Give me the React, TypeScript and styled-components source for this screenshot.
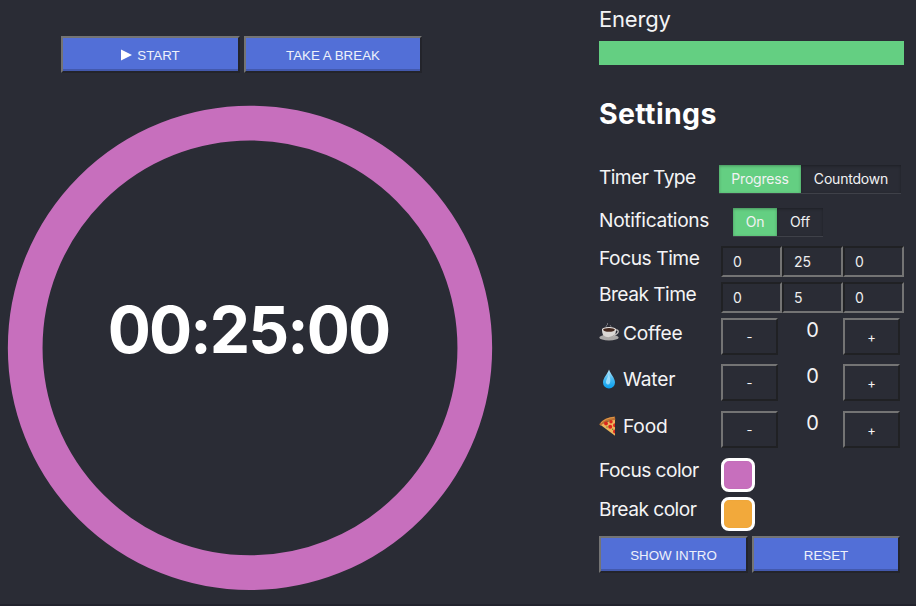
import React from "react";
import styled, { createGlobalStyle } from "styled-components";

const GlobalStyle = createGlobalStyle`
  * { box-sizing: border-box; }
  body {
    margin: 0;
    background: #2a2c35;
    color: #f4f4f5;
    font-family: Inter, "Noto Sans", sans-serif;
    overflow: hidden;
  }
`;

const Page = styled.div`
  display: flex;
  width: 916px;
  height: 606px;
  border-bottom: 2px solid #22232d;
`;

const TimerPane = styled.main`
  width: 599px;
  padding: 36px 0 0 7px;
`;

const Actions = styled.div<{ $inset?: number }>`
  display: flex;
  gap: 4px;
  padding-left: ${(p) => p.$inset ?? 0}px;
`;

const ActionButton = styled.button<{ $width: number }>`
  display: flex;
  align-items: center;
  justify-content: center;
  gap: 5px;
  width: ${(p) => p.$width}px;
  height: 37px;
  padding: 1px 0 0;
  border: 2px solid;
  border-color: #747474 #23242b #23242b #747474;
  background: #526fd7;
  box-shadow: inset 0 -2px 0 #4359ad;
  color: #eef1fb;
  font: 13.33px "Liberation Sans", Arial, sans-serif;
`;

const Dial = styled.div`
  display: grid;
  width: 486px;
  height: 486px;
  margin-top: 32px;
  place-items: center;
  > * { grid-area: 1 / 1; }
`;

const Clock = styled.div`
  margin-top: -37px;
  padding-right: 3px;
  color: #fff;
  font-size: 64px;
  font-weight: 700;
  line-height: 78px;
  letter-spacing: -1.9px;
  white-space: nowrap;
`;

const SidePane = styled.aside`
  width: 305px;
`;

const Label = styled.div<{ $top?: number; $tracking?: number }>`
  display: flex;
  align-items: center;
  gap: 4px;
  height: 24px;
  margin-top: ${(p) => p.$top ?? 0}px;
  font-size: 19.2px;
  line-height: 24px;
  letter-spacing: ${(p) => p.$tracking ?? -0.2}px;
  white-space: nowrap;
`;

const EnergyLabel = styled(Label)`
  height: 34px;
  align-items: flex-start;
  font-size: 22px;
`;

const EnergyBar = styled.div`
  height: 24px;
  background: #64cf82;
`;

const Heading = styled.h2`
  margin: 31px 0 33px;
  font-size: 28.5px;
  font-weight: 700;
  line-height: 36px;
  letter-spacing: 0.35px;
  color: #fff;
`;

const Row = styled.div<{ $height: number; $labelWidth?: number }>`
  display: grid;
  grid-template-columns: ${(p) => p.$labelWidth ?? 122}px 1fr;
  align-items: start;
  height: ${(p) => p.$height}px;
`;

const Toggle = styled.div`
  display: flex;
`;

const Option = styled.button<{ $width: number; $active?: boolean }>`
  width: ${(p) => p.$width}px;
  height: 28px;
  padding: 0;
  border: 0;
  background: ${(p) => (p.$active ? "#64cf82" : "#2a2c35")};
  box-shadow: inset 0 1px 3px rgba(0, 0, 0, 0.3), 0 1px rgba(255, 255, 255, 0.1);
  color: #f1f2f3;
  font: 14px/28px Inter, sans-serif;
  letter-spacing: -0.2px;
`;

const Cells = styled.div`
  display: grid;
  grid-template-columns: repeat(3, 61px);
`;

const TimeInput = styled.input`
  width: 61px;
  height: 31px;
  padding: 0 0 0 10px;
  border: 2px solid;
  border-color: #202124 #747474 #747474 #202124;
  border-radius: 0;
  background: #2a2c35;
  color: #eeeeef;
  font: 14px Inter, sans-serif;
`;

const StepButton = styled.button`
  width: 57px;
  height: 37px;
  padding: 0;
  border: 2px solid;
  border-color: #747474 #202124 #202124 #747474;
  background: #2a2c35;
  color: #f4f4f5;
  font: 13px Inter, sans-serif;
`;

const Count = styled.div`
  font-size: 20px;
  line-height: 25px;
  text-align: center;
`;

const Swatch = styled.div<{ $color: string }>`
  width: 34px;
  height: 34px;
  border: 3px solid #fff;
  border-radius: 8px;
  background: ${(p) => p.$color};
  box-shadow: inset 0 0 1px rgba(0, 0, 0, 0.12);
`;

const Icon = styled.svg`
  display: block;
  width: 20px;
  height: 20px;
  flex: none;
`;

const Play = styled.svg`
  width: 11px;
  height: 12px;
`;

const Ring = () => (
  <svg width="486" height="486" viewBox="0 0 486 486">
    <circle cx="243" cy="242.9" r="224.8" fill="none" stroke="#c76fbd" strokeWidth="34.7" />
  </svg>
);

const CoffeeIcon = () => (
  <Icon viewBox="0 0 20 20">
    <path d="M8 5q-2-2 0-3q2-1 0-2M11 5q2-2 0-3" fill="none" stroke="#77777e" strokeWidth=".9" />
    <ellipse cx="10" cy="14.5" rx="9.7" ry="3" fill="#aaa8a7" />
    <path d="M16 7c4-1 4.5 3 0 5" fill="none" stroke="#c5c2c0" strokeWidth="1.3" />
    <path d="M3 6.5h14c0 5-2 9-7 9s-7-4-7-9z" fill="#dad7d4" />
    <path d="M4 12q6 5 12-1l-2 4q-5 2-8 0z" fill="#aaa7a5" />
    <ellipse cx="10" cy="6.5" rx="7" ry="2.6" fill="#eeeae7" />
    <ellipse cx="10" cy="6.8" rx="5.9" ry="1.9" fill="#45291f" />
  </Icon>
);

const WaterIcon = () => (
  <Icon viewBox="0 0 20 20">
    <defs>
      <linearGradient id="drop" x1="0" y1="0" x2="0" y2="1">
        <stop offset="0" stopColor="#c1edff" />
        <stop offset=".5" stopColor="#48baf1" />
        <stop offset="1" stopColor="#079ff0" />
      </linearGradient>
    </defs>
    <path d="M10 .5C8.5 5 4 9 4 13.5a6 6 0 0 0 12 0C16 9 11.5 5 10 .5z" fill="url(#drop)" />
    <path d="M9.7 5C9 9 6.5 11 7 14q2 3 4 0Q12 10 9.7 5z" fill="#b9eaff" opacity=".75" />
  </Icon>
);

const PizzaIcon = () => (
  <Icon viewBox="0 0 20 20">
    <path d="M1 8.5 16 3v16.8z" fill="#edb65c" />
    <path d="M.2 8.2Q5 1 16 .5l.3 3.4Q7 4.5 1.5 9.8z" fill="#bd7131" />
    <path d="M2 7Q7 2 15 1.5" fill="none" stroke="#df9b4c" strokeWidth="1" />
    <g fill="#d9261d">
      <circle cx="7" cy="7.5" r="1.9" />
      <circle cx="12" cy="5.7" r="1.7" />
      <circle cx="11.2" cy="10.8" r="2" />
      <path d="M16 7.2a2 2 0 0 0 0 4zM16 13.5a2 2 0 0 0 0 4z" />
    </g>
    <circle cx="8" cy="11" r=".7" fill="#65752a" />
    <circle cx="13.7" cy="13.2" r=".7" fill="#65752a" />
  </Icon>
);

const times = [
  { label: "Focus Time", values: [0, 25, 0], tracking: -0.45 },
  { label: "Break Time", values: [0, 5, 0], tracking: -0.55 },
];

const counters = [
  { label: "Coffee", icon: <CoffeeIcon />, height: 46 },
  { label: "Water", icon: <WaterIcon />, height: 47 },
  { label: "Food", icon: <PizzaIcon />, height: 47 },
];

const colors = [
  { label: "Focus color", color: "#c76fbd" },
  { label: "Break color", color: "#f2a93b" },
];

export default function App() {
  return (
    <>
      <GlobalStyle />
      <Page>
        <TimerPane>
          <Actions $inset={54}>
            <ActionButton $width={179}>
              <Play viewBox="0 0 11 12"><path d="M0 .5 11 6 0 11.5z" fill="#fff" /></Play>
              START
            </ActionButton>
            <ActionButton $width={178}>TAKE A BREAK</ActionButton>
          </Actions>
          <Dial><Ring /><Clock>00:25:00</Clock></Dial>
        </TimerPane>
        <SidePane>
          <EnergyLabel $top={7}>Energy</EnergyLabel>
          <EnergyBar />
          <Heading>Settings</Heading>
          <Row $height={43} $labelWidth={120}>
            <Label $tracking={-0.6}>Timer Type</Label>
            <Toggle>
              <Option $width={82} $active>Progress</Option>
              <Option $width={100}>Countdown</Option>
            </Toggle>
          </Row>
          <Row $height={38} $labelWidth={134}>
            <Label $tracking={-0.33}>Notifications</Label>
            <Toggle>
              <Option $width={44} $active>On</Option>
              <Option $width={46}>Off</Option>
            </Toggle>
          </Row>
          {times.map((t) => (
            <Row key={t.label} $height={36}>
              <Label $tracking={t.tracking}>{t.label}</Label>
              <Cells>
                {t.values.map((v, i) => <TimeInput key={i} defaultValue={v} />)}
              </Cells>
            </Row>
          ))}
          {counters.map((c) => (
            <Row key={c.label} $height={c.height}>
              <Label $top={3}>{c.icon}{c.label}</Label>
              <Cells>
                <StepButton>-</StepButton>
                <Count>0</Count>
                <StepButton>+</StepButton>
              </Cells>
            </Row>
          ))}
          {colors.map((c) => (
            <Row key={c.label} $height={39}>
              <Label $tracking={-0.55}>{c.label}</Label>
              <Swatch $color={c.color} />
            </Row>
          ))}
          <Actions>
            <ActionButton $width={149}>SHOW INTRO</ActionButton>
            <ActionButton $width={148}>RESET</ActionButton>
          </Actions>
        </SidePane>
      </Page>
    </>
  );
}
